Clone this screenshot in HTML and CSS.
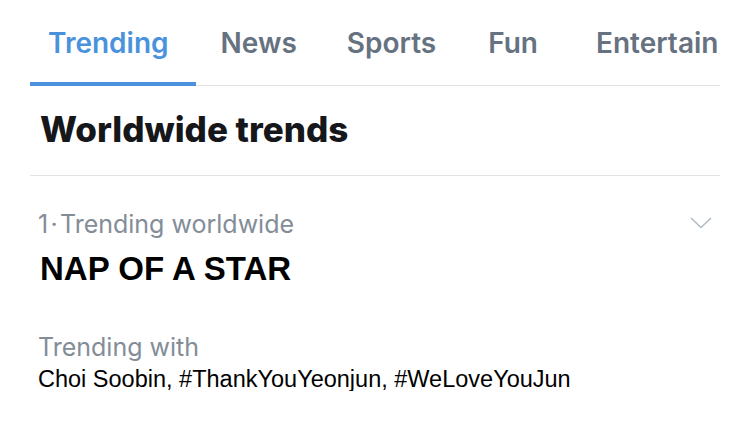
FILE: index.html
```html
<!DOCTYPE html>
<html>
<head>
    <title>Trends</title>
    <link rel="stylesheet" href="styles.css">
</head>
<body>
    <section id="wrapper">
        <nav class="tabs">
            <a class="tab active">Trending</a>
            <a class="tab">News</a>
            <a class="tab">Sports</a>
            <a class="tab fun">Fun</a>
            <a class="tab">Entertain</a>
        </nav>
        <h2 class="title">Worldwide trends</h2>
        <div class="trend">
            <div class="trend-top">
                <span class="meta">1&#8202;·&#8202;Trending worldwide</span>
                <svg class="chevron" width="22" height="12" viewBox="0 0 22 12">
                    <path d="M1 1 L11 10.5 L21 1" fill="none" stroke="#b3bcc4" stroke-width="1.6"/>
                </svg>
            </div>
            <div class="name">NAP OF A STAR</div>
            <div class="meta with">Trending with</div>
            <div class="related">Choi Soobin, #ThankYouYeonjun, #WeLoveYouJun</div>
        </div>
    </section>
</body>
</html>
```

FILE: styles.css
```css
body {
    margin: 0;
    background: #fff;
    font-family: Inter, "Noto Sans", sans-serif;
}
#wrapper {
    width: 690px;
    margin-left: 30px;
    overflow: hidden;
}
.tabs {
    display: flex;
    border-bottom: 1px solid #dfe3e6;
    white-space: nowrap;
}
.tab {
    flex: none;
    padding: 29px 25px 25px;
    font-size: 28px;
    line-height: 28px;
    font-weight: 600;
    color: #66727f;
    border-bottom: 4px solid transparent;
    margin-bottom: -1px;
}
.tab.active {
    color: #4a93dc;
    border-bottom-color: #4a93dc;
    padding-left: 18px;
    padding-right: 27px;
}
.tab.fun {
    padding-left: 27px;
    padding-right: 33px;
}
.title {
    margin: 0;
    padding: 25px 0 28px 10px;
    font-size: 35px;
    line-height: 36px;
    font-weight: 800;
    color: #15171b;
    border-bottom: 1px solid #dfe3e6;
}
.trend {
    padding: 0 0 0 8px;
}
.trend-top {
    display: flex;
    justify-content: space-between;
    align-items: flex-start;
    padding-top: 36px;
}
.meta {
    font-size: 25px;
    line-height: 25px;
    color: #838d98;
}
.chevron {
    margin: 5px 8px 0 0;
}
.name {
    padding: 15px 0 0 2px;
    font-family: "Liberation Sans", Arial, sans-serif;
    font-weight: bold;
    font-size: 33px;
    line-height: 33px;
    color: #000;
}
.with {
    padding-top: 50px;
}
.related {
    padding-top: 7px;
    font-family: "Liberation Sans", Arial, sans-serif;
    font-size: 23.5px;
    line-height: 24px;
    color: #000;
}
```
